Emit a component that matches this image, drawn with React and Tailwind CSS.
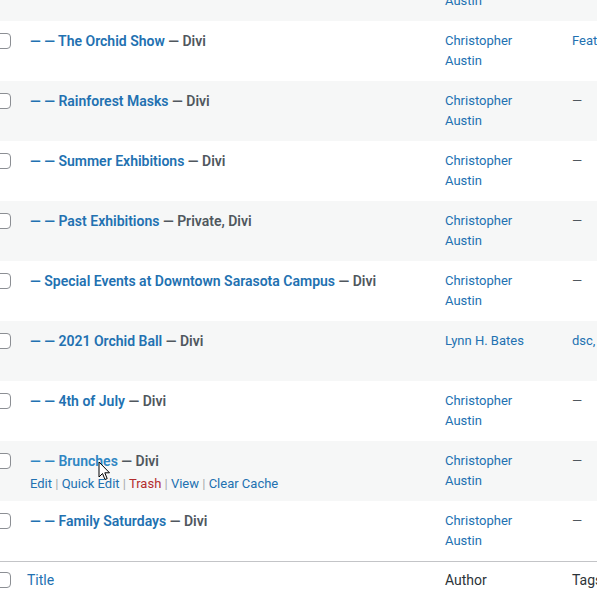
const rows = [
  { prefix: "", title: "", state: "", author: ["Christopher", "Austin"], tags: "" },
  { prefix: "— — ", title: "The Orchid Show", state: "Divi", author: ["Christopher", "Austin"], tags: "Featured" },
  { prefix: "— — ", title: "Rainforest Masks", state: "Divi", author: ["Christopher", "Austin"], tags: "—" },
  { prefix: "— — ", title: "Summer Exhibitions", state: "Divi", author: ["Christopher", "Austin"], tags: "—" },
  { prefix: "— — ", title: "Past Exhibitions", state: "Private, Divi", author: ["Christopher", "Austin"], tags: "—" },
  { prefix: "— ", title: "Special Events at Downtown Sarasota Campus", state: "Divi", author: ["Christopher", "Austin"], tags: "—" },
  { prefix: "— — ", title: "2021 Orchid Ball", state: "Divi", author: ["Lynn H. Bates"], tags: "dsc, gala" },
  { prefix: "— — ", title: "4th of July", state: "Divi", author: ["Christopher", "Austin"], tags: "—" },
  { prefix: "— — ", title: "Brunches", state: "Divi", author: ["Christopher", "Austin"], tags: "—", hover: true },
  { prefix: "— — ", title: "Family Saturdays", state: "Divi", author: ["Christopher", "Austin"], tags: "—" },
]

function Checkbox() {
  return (
    <div className="-ml-[5px] h-[16px] w-[16px] rounded-[4px] border border-[#8c8f94] bg-white" />
  )
}

function Sep() {
  return <span className="text-[#a7aaad]"> | </span>
}

function Row({ row, striped }) {
  return (
    <div className={`flex h-[60px] ${striped ? "bg-[#f6f7f7]" : "bg-white"}`}>
      <div className="w-[20px] shrink-0 pt-[12px]">
        {row.title && <Checkbox />}
      </div>
      <div className="w-[415px] shrink-0 px-[10px] pt-[10px]">
        {row.title && (
          <div className="whitespace-nowrap text-[14px] font-semibold leading-[20px]">
            <span className={row.hover ? "text-[#2f86c3]" : "text-[#2271b1]"}>
              {row.prefix}
              {row.title}
            </span>
            <span className="text-[#50575e]"> — {row.state}</span>
          </div>
        )}
        {row.hover && (
          <div className="mt-[3px] whitespace-pre text-[13px] leading-[20px] text-[#2271b1]">
            Edit
            <Sep />
            Quick Edit
            <Sep />
            <span className="text-[#b32d2e]">Trash</span>
            <Sep />
            View
            <Sep />
            Clear Cache
          </div>
        )}
      </div>
      <div className="w-[127px] shrink-0 px-[10px] pt-[10px] text-[13px] leading-[20px] text-[#2271b1]">
        {row.author.map((a) => (
          <div key={a}>{a}</div>
        ))}
      </div>
      <div className="shrink-0 whitespace-nowrap px-[10px] pt-[10px] text-[13px] leading-[20px] text-[#50575e]">
        {row.tags === "—" ? row.tags : <span className="text-[#2271b1]">{row.tags}</span>}
      </div>
    </div>
  )
}

export default function App() {
  return (
    <div className="relative h-[591px] w-[597px] overflow-hidden bg-white font-['Roboto',sans-serif]">
      <div className="-mt-[39px]">
        {rows.map((row, i) => (
          <Row key={i} row={row} striped={i % 2 === 0} />
        ))}
        <div className="flex h-[40px] border-t border-[#c3c4c7] bg-white">
          <div className="w-[20px] shrink-0 pt-[10px]">
            <Checkbox />
          </div>
          <div className="w-[415px] shrink-0 px-[7px] pt-[8px] text-[14px] leading-[20px] text-[#2271b1]">
            Title
          </div>
          <div className="w-[127px] shrink-0 px-[10px] pt-[8px] text-[14px] leading-[20px] text-[#2c3338]">
            Author
          </div>
          <div className="px-[10px] pt-[8px] text-[14px] leading-[20px] text-[#2c3338]">
            Tags
          </div>
        </div>
      </div>

      {/* mouse pointer over "Brunches" */}
      <svg
        className="absolute left-[98px] top-[461px]"
        width="14"
        height="21"
        viewBox="0 0 14 21"
      >
        <path
          d="M1 1 L1 16 L4.5 12.5 L7 18.5 L9.2 17.6 L6.8 11.8 L11.5 11.8 Z"
          fill="#fff"
          stroke="#000"
          strokeWidth="1"
          strokeLinejoin="round"
        />
      </svg>
    </div>
  )
}
